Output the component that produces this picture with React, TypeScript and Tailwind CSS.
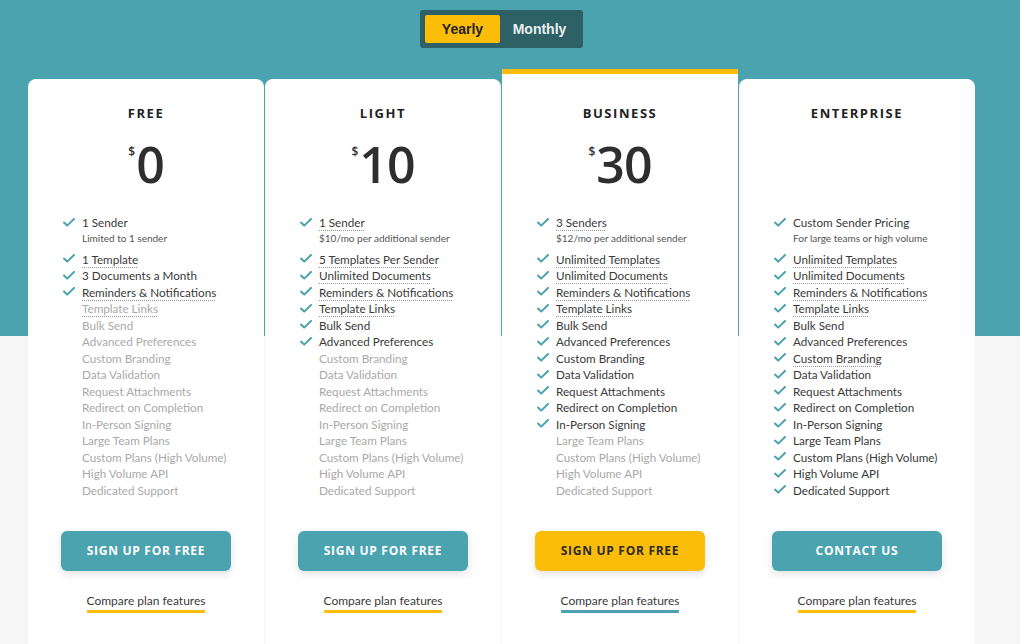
import { Fragment } from "react";

type Feature = { label: string; on: boolean; dotted?: boolean };

type Plan = {
  name: string;
  price: string;
  lead: string;
  leadDotted: boolean;
  sub: string;
  features: Feature[];
  featured?: boolean;
  cta: string;
};

const baseNames = [
  "Template Links",
  "Bulk Send",
  "Advanced Preferences",
  "Custom Branding",
  "Data Validation",
  "Request Attachments",
  "Redirect on Completion",
  "In-Person Signing",
  "Large Team Plans",
  "Custom Plans (High Volume)",
  "High Volume API",
  "Dedicated Support",
];

// how many of the base rows are included, and which ones get the dotted tooltip line
function rows(first: Feature[], included: number, dotted: string[]): Feature[] {
  return [
    ...first,
    ...baseNames.map((label, i) => ({ label, on: i < included, dotted: dotted.includes(label) })),
  ];
}

const plans: Plan[] = [
  {
    name: "FREE",
    price: "0",
    lead: "1 Sender",
    leadDotted: false,
    sub: "Limited to 1 sender",
    cta: "SIGN UP FOR FREE",
    features: rows(
      [
        { label: "1 Template", on: true, dotted: true },
        { label: "3 Documents a Month", on: true },
        { label: "Reminders & Notifications", on: true, dotted: true },
      ],
      0,
      ["Template Links"]
    ),
  },
  {
    name: "LIGHT",
    price: "10",
    lead: "1 Sender",
    leadDotted: true,
    sub: "$10/mo per additional sender",
    cta: "SIGN UP FOR FREE",
    features: rows(
      [
        { label: "5 Templates Per Sender", on: true, dotted: true },
        { label: "Unlimited Documents", on: true, dotted: true },
        { label: "Reminders & Notifications", on: true, dotted: true },
      ],
      3,
      ["Template Links"]
    ),
  },
  {
    name: "BUSINESS",
    price: "30",
    lead: "3 Senders",
    leadDotted: true,
    sub: "$12/mo per additional sender",
    cta: "SIGN UP FOR FREE",
    featured: true,
    features: rows(
      [
        { label: "Unlimited Templates", on: true, dotted: true },
        { label: "Unlimited Documents", on: true, dotted: true },
        { label: "Reminders & Notifications", on: true, dotted: true },
      ],
      8,
      ["Template Links"]
    ),
  },
  {
    name: "ENTERPRISE",
    price: "",
    lead: "Custom Sender Pricing",
    leadDotted: false,
    sub: "For large teams or high volume",
    cta: "CONTACT US",
    features: rows(
      [
        { label: "Unlimited Templates", on: true, dotted: true },
        { label: "Unlimited Documents", on: true, dotted: true },
        { label: "Reminders & Notifications", on: true, dotted: true },
      ],
      12,
      ["Template Links", "Custom Branding"]
    ),
  },
];

function Check({ show }: { show: boolean }) {
  return (
    <span className="w-[19px] shrink-0 flex items-center h-[16.5px]">
      {show && (
        <svg width="12" height="9" viewBox="0 0 12 9" fill="none">
          <path d="M1 4.6 4.2 7.6 11 1" stroke="#4aa3af" strokeWidth="2" strokeLinecap="round" strokeLinejoin="round" />
        </svg>
      )}
    </span>
  );
}

function Label({ text, on, dotted }: { text: string; on: boolean; dotted?: boolean }) {
  return (
    <span
      className={`${on ? "text-[#3a3a3a]" : "text-[#a9a9a9]"} ${
        dotted ? "underline decoration-dotted decoration-[#9a9a9a] underline-offset-[3px]" : ""
      }`}
    >
      {text}
    </span>
  );
}

function Card({ plan }: { plan: Plan }) {
  const featured = !!plan.featured;
  return (
    <div
      className={`w-[236px] bg-white flex flex-col items-center ${
        featured ? "border-t-[5px] border-[#fbbd08] pt-[29px]" : "mt-[10px] rounded-t-[8px] pt-[24px]"
      }`}
    >
      <h3 className="font-['Open_Sans',sans-serif] font-bold text-[13px] tracking-[0.12em] text-[#222] leading-[20px]">
        {plan.name}
      </h3>
      <div className="h-[66px] mt-[8px] flex items-start">
        {plan.price && (
          <>
            <span className="font-['Open_Sans',sans-serif] font-semibold text-[12px] text-[#333] mt-[12px] mr-[1px]">$</span>
            <span className="font-['Open_Sans',sans-serif] font-semibold text-[50px] leading-[66px] tracking-[-0.02em] text-[#2e2e2e]">
              {plan.price}
            </span>
          </>
        )}
      </div>
      <div className="w-full pl-[35px] pr-2 mt-[17px] font-['Lato',sans-serif] text-[11.7px] leading-[16.5px]">
        <div className="flex">
          <Check show />
          <div>
            <Label text={plan.lead} on dotted={plan.leadDotted} />
            <div className="text-[10px] leading-[14px] text-[#555]">{plan.sub}</div>
          </div>
        </div>
        <div className="mt-[6px]">
          {plan.features.map((f, i) => (
            <Fragment key={i}>
              <div className="flex">
                <Check show={f.on} />
                <Label text={f.label} on={f.on} dotted={f.dotted} />
              </div>
            </Fragment>
          ))}
        </div>
      </div>
      <button
        className={`mt-[33px] w-[170px] h-[40px] rounded-[6px] font-['Open_Sans',sans-serif] font-bold text-[12px] tracking-[0.06em] shadow-[0_3px_8px_rgba(0,0,0,0.12)] ${
          featured ? "bg-[#fbbd08] text-[#2a2a2a]" : "bg-[#4aa3af] text-white"
        }`}
      >
        {plan.cta}
      </button>
      <a
        className={`mt-[22px] font-['Lato',sans-serif] text-[12px] leading-[16px] text-[#3a3a3a] pb-[1px] border-b-[3px] rounded-[1px] ${
          featured ? "border-[#4aa3af]" : "border-[#fbbd08]"
        }`}
      >
        Compare plan features
      </a>
      <div className="h-[40px]" />
    </div>
  );
}

export default function App() {
  return (
    <div className="w-[1020px] h-[644px] overflow-hidden bg-[linear-gradient(to_bottom,#4aa3af_336px,#f6f6f6_336px)]">
      <div className="w-[947px] ml-[28px] flex flex-col items-center pt-[10px]">
        <div className="flex items-center bg-[#2d6166] rounded-[3px] p-[5px] pr-[4px] w-[163px] h-[38px]">
          <span className="w-[75px] h-[28px] bg-[#fbbd08] rounded-[2px] flex items-center justify-center font-['Liberation_Sans',sans-serif] font-bold text-[14px] text-[#222]">
            Yearly
          </span>
          <span className="flex-1 flex items-center justify-center font-['Liberation_Sans',sans-serif] font-bold text-[14px] text-[#e8f0f1]">
            Monthly
          </span>
        </div>
        <div className="mt-[21px] flex items-start gap-px">
          {plans.map((p) => (
            <Card key={p.name} plan={p} />
          ))}
        </div>
      </div>
    </div>
  );
}
